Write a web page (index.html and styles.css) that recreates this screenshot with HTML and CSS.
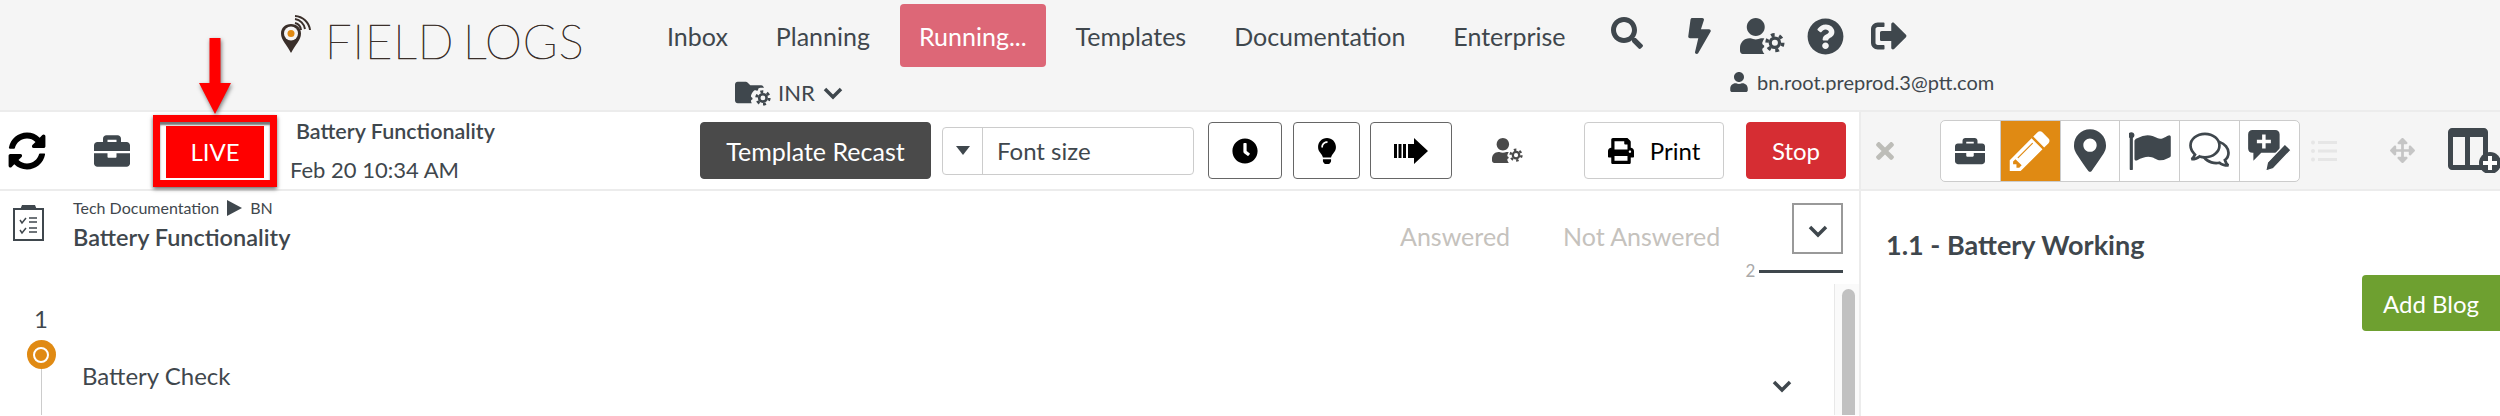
FILE: index.html
```html
<!DOCTYPE html>
<html>
    <head>
        <title>Field Logs</title>
        <meta charset="UTF-8">
        <meta name="viewport" content="width=device-width, initial-scale=1.0">
        <link rel="stylesheet" href="styles.css">
    </head>
    <body>
        <svg class="defs" aria-hidden="true">
            <symbol id="i-sync" viewBox="0 0 512 512"><path d="M370.72 133.28C339.458 104.008 298.888 87.962 255.848 88c-77.458.068-144.328 53.178-162.791 126.85-1.344 5.363-6.122 9.15-11.651 9.15H24.103c-7.498 0-13.194-6.807-11.807-14.176C33.933 94.924 134.813 8 256 8c66.448 0 126.791 26.136 171.315 68.685L463.03 40.97C478.149 25.851 504 36.559 504 57.941V192c0 13.255-10.745 24-24 24H345.941c-21.382 0-32.09-25.851-16.971-40.971l41.75-41.749zM32 296h134.059c21.382 0 32.09 25.851 16.971 40.971l-41.75 41.75c31.262 29.273 71.835 45.319 114.876 45.28 77.418-.07 144.315-53.144 162.787-126.849 1.344-5.363 6.122-9.15 11.651-9.15h57.304c7.498 0 13.194 6.807 11.807 14.176C478.067 417.076 377.187 504 256 504c-66.448 0-126.791-26.136-171.315-68.685L48.97 471.03C33.851 486.149 8 475.441 8 454.059V320c0-13.255 10.745-24 24-24z"/></symbol>
            <symbol id="i-briefcase" viewBox="0 0 512 512"><path d="M320 336c0 8.84-7.16 16-16 16h-96c-8.84 0-16-7.16-16-16v-48H0v144c0 25.6 22.4 48 48 48h416c25.6 0 48-22.4 48-48V288H320v48zm144-208h-80V80c0-25.6-22.4-48-48-48H176c-25.6 0-48 22.4-48 48v48H48c-25.6 0-48 22.4-48 48v80h512v-80c0-25.6-22.4-48-48-48zm-144 0H192V96h128v32z"/></symbol>
            <symbol id="i-search" viewBox="0 0 512 512"><path d="M505 442.7L405.3 343c-4.5-4.5-10.6-7-17-7H372c27.6-35.3 44-79.7 44-128C416 93.1 322.9 0 208 0S0 93.1 0 208s93.1 208 208 208c48.3 0 92.7-16.4 128-44v16.3c0 6.4 2.5 12.5 7 17l99.7 99.7c9.4 9.4 24.6 9.4 33.9 0l28.3-28.3c9.4-9.4 9.4-24.6.1-34zM208 336c-70.7 0-128-57.2-128-128 0-70.7 57.2-128 128-128 70.7 0 128 57.2 128 128 0 70.7-57.2 128-128 128z"/></symbol>
            <symbol id="i-bolt" viewBox="0 0 320 512"><path d="M296 160H180.6l42.6-129.8C227.2 15 215.7 0 200 0H56C44 0 33.8 8.9 32.2 20.8l-32 240C-1.7 275.2 9.5 288 24 288h118.7L96.6 482.5c-3.6 15.2 8 29.5 23.3 29.5 8.4 0 16.4-4.4 20.8-12l176-304c9.3-15.9-2.2-36-20.7-36z"/></symbol>
            <symbol id="i-question" viewBox="0 0 512 512"><path d="M504 256c0 136.997-111.043 248-248 248S8 392.997 8 256C8 119.083 119.043 8 256 8s248 111.083 248 248zM262.655 90c-54.497 0-89.255 22.957-116.549 63.758-3.536 5.286-2.353 12.415 2.715 16.258l34.699 26.31c5.205 3.947 12.621 3.008 16.665-2.122 17.864-22.658 30.113-35.797 57.303-35.797 20.429 0 45.698 13.148 45.698 32.958 0 14.976-12.363 22.667-32.534 33.976C247.128 238.528 216 254.941 216 296v4c0 6.627 5.373 12 12 12h56c6.627 0 12-5.373 12-12v-1.333c0-28.462 83.186-29.647 83.186-106.667 0-58.002-60.165-102-116.531-102zM256 338c-25.365 0-46 20.635-46 46 0 25.364 20.635 46 46 46s46-20.636 46-46c0-25.365-20.635-46-46-46z"/></symbol>
            <symbol id="i-signout" viewBox="0 0 512 512"><path d="M497 273L329 441c-15 15-41 4.5-41-17v-96H152c-13.3 0-24-10.7-24-24v-96c0-13.3 10.7-24 24-24h136V88c0-21.4 25.9-32 41-17l168 168c9.3 9.4 9.3 24.6 0 34zM192 436v-40c0-6.6-5.4-12-12-12H96c-17.7 0-32-14.3-32-32V160c0-17.7 14.3-32 32-32h84c6.6 0 12-5.4 12-12V76c0-6.6-5.4-12-12-12H96c-53 0-96 43-96 96v192c0 53 43 96 96 96h84c6.6 0 12-5.4 12-12z"/></symbol>
            <symbol id="i-user" viewBox="0 0 448 512"><path d="M224 256c70.7 0 128-57.3 128-128S294.7 0 224 0 96 57.3 96 128s57.3 128 128 128zm89.6 32h-16.7c-22.2 10.2-46.9 16-72.9 16s-50.6-5.8-72.9-16h-16.7C60.2 288 0 348.2 0 422.4V464c0 26.5 21.5 48 48 48h352c26.5 0 48-21.5 48-48v-41.6c0-74.2-60.2-134.4-134.4-134.4z"/></symbol>
            <symbol id="i-usercog" viewBox="0 0 640 512">
                <path d="M224 256c70.7 0 128-57.3 128-128S294.7 0 224 0 96 57.3 96 128s57.3 128 128 128z"/>
                <path d="M0 464v-41.6C0 348.2 60.2 288 134.4 288h16.7c22.3 10.2 46.9 16 72.9 16s50.7-5.8 72.9-16h16.7c12 0 22 1.500 32 4-12 17-22 37-28 58-4 14 2 28 14 35l12 7v24l-12 7c-12 7-18 21-14 35 6 20 16 39 30 55H48c-26.500 0-48-21.500-48-48z"/>
                <circle cx="496" cy="352" r="66" fill="none" stroke="currentColor" stroke-width="46"/>
                <circle cx="496" cy="352" r="112" fill="none" stroke="currentColor" stroke-width="50" stroke-dasharray="52 65.300"/>
            </symbol>
            <symbol id="i-foldercog" viewBox="0 0 640 512">
                <path d="M464 128H272l-54.600-54.600C211.400 67.400 203.300 64 194.700 64H48C21.500 64 0 85.500 0 112v288c0 26.500 21.500 48 48 48h250c-6-10-10-20-13-30-4-14 2-28 14-35l12-7v-24l-12-7c-12-7-18-21-14-35 10-34 30-65 56-88 11-9 26-10 38-3l12 7c6-3 13-7 20-9v-14c0-14 9-26 23-29 12-3 30-4 42-4 16 0 20 1 36 4V176c0-26.500-21.500-48-48-48z"/>
                <circle cx="496" cy="352" r="66" fill="none" stroke="currentColor" stroke-width="46"/>
                <circle cx="496" cy="352" r="112" fill="none" stroke="currentColor" stroke-width="50" stroke-dasharray="52 65.300"/>
            </symbol>
            <symbol id="i-clock" viewBox="0 0 512 512"><path d="M256 8C119 8 8 119 8 256s111 248 248 248 248-111 248-248S393 8 256 8zm92.490 313l-20 25a16 16 0 0 1-22.490 2.500l-67-49.720a40 40 0 0 1-15-31.230V112a16 16 0 0 1 16-16h32a16 16 0 0 1 16 16v144l58 42.500a16 16 0 0 1 2.490 22.500z"/></symbol>
            <symbol id="i-bulb" viewBox="0 0 352 512"><path d="M96.060 454.350c.01 6.290 1.870 12.450 5.360 17.690l17.090 25.690a31.990 31.990 0 0 0 26.640 14.280h61.710a31.990 31.990 0 0 0 26.640-14.280l17.090-25.690a31.989 31.989 0 0 0 5.360-17.690l.04-38.350H96.010l.05 38.350zM0 176c0 44.370 16.450 84.850 43.560 115.780 16.520 18.850 42.360 58.230 52.210 91.450.04.260.07.520.11.780h160.240c.04-.260.07-.510.11-.780 9.850-33.220 35.690-72.600 52.210-91.450C335.550 260.850 352 220.370 352 176 352 78.610 272.910-.3 175.450 0 73.440.31 0 82.970 0 176zm176-80c-44.110 0-80 35.890-80 80 0 8.840-7.160 16-16 16s-16-7.160-16-16c0-61.760 50.240-112 112-112 8.840 0 16 7.160 16 16s-7.160 16-16 16z"/></symbol>
            <symbol id="i-print" viewBox="0 0 512 512"><path d="M448 192V77.250c0-8.490-3.370-16.620-9.370-22.630L393.370 9.370c-6-6-14.140-9.370-22.630-9.370H96C78.330 0 64 14.330 64 32v160c-35.350 0-64 28.650-64 64v112c0 8.840 7.160 16 16 16h48v96c0 17.670 14.330 32 32 32h320c17.670 0 32-14.330 32-32v-96h48c8.840 0 16-7.160 16-16V256c0-35.350-28.650-64-64-64zm-64 256H128v-96h256v96zm0-224H128V64h192v48c0 8.840 7.160 16 16 16h48v96zm48 72c-13.250 0-24-10.750-24-24 0-13.260 10.750-24 24-24s24 10.740 24 24c0 13.250-10.750 24-24 24z"/></symbol>
            <symbol id="i-times" viewBox="0 0 352 512"><path d="M242.720 256l100.070-100.070c12.280-12.280 12.280-32.190 0-44.480l-22.240-22.240c-12.280-12.280-32.190-12.280-44.480 0L176 189.280 75.930 89.210c-12.280-12.280-32.190-12.280-44.480 0L9.210 111.450c-12.280 12.280-12.280 32.190 0 44.480L109.280 256 9.210 356.070c-12.280 12.280-12.280 32.190 0 44.480l22.240 22.240c12.280 12.280 32.200 12.280 44.480 0L176 322.720l100.070 100.070c12.280 12.280 32.200 12.280 44.480 0l22.240-22.240c12.280-12.280 12.280-32.190 0-44.480L242.720 256z"/></symbol>
            <symbol id="i-pencil" viewBox="100 100 1600 1600"><path d="M491 1536l91-91-235-235-91 91v107h128v128h107zm523-928q0-22-22-22-10 0-17 7l-542 542q-7 7-7 17 0 22 22 22 10 0 17-7l542-542q7-7 7-17zm-54-192l416 416-832 832h-416v-416zm683 96q0 53-37 90l-166 166-416-416 166-165q36-38 90-38 53 0 91 38l235 234q37 39 37 91z"/></symbol>
            <symbol id="i-marker" viewBox="0 0 384 512"><path d="M172.268 501.670C26.970 291.031 0 268.413 0 192 0 85.961 85.961 0 192 0s192 85.961 192 192c0 76.413-26.970 99.031-172.268 309.670-9.535 13.774-29.930 13.773-39.464 0zM192 272c44.183 0 80-35.817 80-80s-35.817-80-80-80-80 35.817-80 80 35.817 80 80 80z"/></symbol>
            <symbol id="i-flag" viewBox="100 120 1700 1540"><path d="M320 256q0 72-64 110v1266q0 13-9.500 22.500t-22.500 9.500h-64q-13 0-22.500-9.500t-9.500-22.500v-1266q-64-38-64-110 0-53 37.500-90.500t90.500-37.500 90.500 37.500 37.500 90.500zm1472 64v763q0 25-12.500 38.500t-39.500 27.500q-215 116-369 116-61 0-123.500-22t-108.500-48-115.500-48-142.500-22q-192 0-464 146-17 9-33 9-26 0-45-19t-19-45v-742q0-32 31-55 21-14 79-43 236-120 421-120 107 0 200 29t219 88q38 19 88 19 54 0 117.500-21t110-47 88-47 54.500-21q26 0 45 19t19 45z"/></symbol>
            <symbol id="i-move" viewBox="0 0 512 512"><path d="M352.201 425.775l-79.196 79.196c-9.373 9.373-24.568 9.373-33.941 0l-79.196-79.196c-15.119-15.119-4.411-40.971 16.971-40.970h51.162L228 284H127.196v51.162c0 21.382-25.851 32.090-40.971 16.971L7.029 272.937c-9.373-9.373-9.373-24.569 0-33.941L86.225 159.800c15.119-15.119 40.971-4.411 40.971 16.971V228H228V127.196h-51.230c-21.382 0-32.090-25.851-16.971-40.971l79.196-79.196c9.373-9.373 24.568-9.373 33.941 0l79.196 79.196c15.119 15.119 4.411 40.971-16.971 40.971h-51.162V228h100.804v-51.162c0-21.382 25.851-32.090 40.970-16.971l79.196 79.196c9.373 9.373 9.373 24.569 0 33.941L425.773 352.200c-15.119 15.119-40.971 4.411-40.970-16.971V284H284v100.804h51.230c21.382 0 32.090 25.851 16.971 40.971z"/></symbol>
        </svg>

        <!-- Шапка -->
        <header class="topbar">
            <div class="logo">
                <svg class="logo-pin" viewBox="0 0 31 38">
                    <path d="M11 9C5 9 1 13 1 18.500c0 6.500 6 11.500 10 19.500 4-8 10-13 10-19.500C21 13 17 9 11 9z" fill="#3a2f2a"/>
                    <circle cx="11" cy="18.500" r="7" fill="#f5f5f5"/>
                    <circle cx="11" cy="18.500" r="3.500" fill="#e08a13"/>
                    <g fill="none" stroke="#3a2f2a" stroke-width="2">
                        <path d="M15 8a8 8 0 0 1 6 7"/>
                        <path d="M15 4a12 12 0 0 1 10 10"/>
                        <path d="M15 1a16 16 0 0 1 15 14"/>
                    </g>
                </svg>
                <span class="logo-text">FIELD LOGS</span>
            </div>
            <div class="top-center">
                <nav class="nav">
                    <a class="nav-link">Inbox</a>
                    <a class="nav-link">Planning</a>
                    <a class="nav-link active">Running...</a>
                    <a class="nav-link">Templates</a>
                    <a class="nav-link">Documentation</a>
                    <a class="nav-link">Enterprise</a>
                </nav>
                <div class="org">
                    <svg class="ic org-ic"><use href="#i-foldercog"/></svg>
                    <span>INR</span>
                    <svg class="chev org-chev" viewBox="0 0 20 14"><path d="M2 3l8 8 8-8"/></svg>
                </div>
            </div>
            <div class="top-right">
                <div class="top-icons">
                    <svg class="ic ic-search"><use href="#i-search"/></svg>
                    <svg class="ic ic-bolt"><use href="#i-bolt"/></svg>
                    <svg class="ic ic-cog"><use href="#i-usercog"/></svg>
                    <svg class="ic ic-help"><use href="#i-question"/></svg>
                    <svg class="ic ic-out"><use href="#i-signout"/></svg>
                </div>
                <div class="account">
                    <svg class="ic ic-user"><use href="#i-user"/></svg>
                    <span>bn.root.preprod.3@ptt.com</span>
                </div>
            </div>
        </header>

        <div class="workspace">
            <main class="main">
                <div class="toolbar">
                    <svg class="ic tb-sync"><use href="#i-sync"/></svg>
                    <svg class="ic tb-case"><use href="#i-briefcase"/></svg>
                    <div class="live-mark">
                        <div class="live-btn">LIVE</div>
                        <!-- Красная стрелка-аннотация -->
                        <svg class="live-arrow" viewBox="0 0 32 76">
                            <path d="M10.500 0h11v45H32L16 76 0 45h10.500z"/>
                        </svg>
                    </div>
                    <div class="run-info">
                        <div class="run-title">Battery Functionality</div>
                        <div class="run-date">Feb 20 10:34 AM</div>
                    </div>
                    <button class="btn btn-dark">Template Recast</button>
                    <div class="font-select">
                        <span class="font-caret"><i></i></span>
                        <span class="font-label">Font size</span>
                    </div>
                    <button class="btn btn-icon btn-clock"><svg class="ic"><use href="#i-clock"/></svg></button>
                    <button class="btn btn-icon btn-bulb"><svg class="ic"><use href="#i-bulb"/></svg></button>
                    <button class="btn btn-icon btn-next">
                        <svg viewBox="0 0 34 26" class="next-ic"><path d="M0 6h3v14H0zM4.500 6h3v14h-3zM9 6h3v14H9zM14 6h6V0l14 13-14 13v-6h-6z"/></svg>
                    </button>
                    <svg class="ic tb-cog"><use href="#i-usercog"/></svg>
                    <button class="btn btn-print"><svg class="ic"><use href="#i-print"/></svg>Print</button>
                    <button class="btn btn-stop">Stop</button>
                </div>

                <div class="doc-head">
                    <svg class="doc-ic" viewBox="0 0 31 36">
                        <path d="M1 4h29v31H1z" fill="none" stroke="#3f474d" stroke-width="2"/>
                        <path d="M9 0h13l2 5H7z" fill="#3f474d"/>
                        <path d="M7 15l2 3 4-5M7 25l2 3 4-5" fill="none" stroke="#3f474d" stroke-width="1.500"/>
                        <path d="M16 13h8M16 17h8M16 23h8M16 27h8" stroke="#3f474d" stroke-width="1.500"/>
                    </svg>
                    <div class="doc-titles">
                        <div class="crumbs">
                            <span>Tech Documentation</span>
                            <i class="crumb-arrow"></i>
                            <span>BN</span>
                        </div>
                        <div class="doc-title">Battery Functionality</div>
                    </div>
                    <div class="filter first">Answered</div>
                    <div class="filter">Not Answered</div>
                    <div class="collapse">
                        <div class="collapse-box"><svg class="chev" viewBox="0 0 20 14"><path d="M2 3l8 8 8-8"/></svg></div>
                        <div class="level"><span>2</span><i></i></div>
                    </div>
                </div>

                <div class="steps">
                    <div class="step-rail">
                        <div class="step-num">1</div>
                        <div class="step-dot"><i></i></div>
                        <div class="step-line"></div>
                    </div>
                    <div class="step-name">Battery Check</div>
                    <svg class="chev step-chev" viewBox="0 0 20 14"><path d="M2 3l8 8 8-8"/></svg>
                    <div class="scrollbar"><i></i></div>
                </div>
            </main>

            <aside class="side">
                <div class="side-bar">
                    <svg class="ic side-x"><use href="#i-times"/></svg>
                    <div class="tabs">
                        <div class="tab"><svg class="ic t-case"><use href="#i-briefcase"/></svg></div>
                        <div class="tab on"><svg class="ic t-pencil"><use href="#i-pencil"/></svg></div>
                        <div class="tab"><svg class="ic t-marker"><use href="#i-marker"/></svg></div>
                        <div class="tab"><svg class="ic t-flag"><use href="#i-flag"/></svg></div>
                        <div class="tab">
                            <svg class="t-chat" viewBox="0 0 46 42" fill="none" stroke="#3f474d" stroke-width="3">
                                <path d="M18 2C9 2 2 8 2 15c0 4 2 7 5 10-1 2-2 4-4 5 4 0 7-1 9-3 2 .7 4 1 6 1 9 0 16-6 16-13S27 2 18 2z"/>
                                <path d="M34 11c6 2 10 7 10 12 0 3-1 6-4 8 1 3 2 5 4 6-4 0-8-1-10-3-5 1-13 0-17-6"/>
                            </svg>
                        </div>
                        <div class="tab">
                            <svg class="t-note" viewBox="0 0 50 48">
                                <path d="M5 0h26c3 0 5 2 5 5v16c0 3-2 5-5 5H15L6 35v-9H5c-3 0-5-2-5-5V5c0-3 2-5 5-5z" fill="#3f474d"/>
                                <path d="M18 5v16M10 13h16" stroke="#fff" stroke-width="4"/>
                                <path d="M42 16l7 7-20 21-9 3 2-10z" fill="#3f474d" stroke="#fff" stroke-width="1.500"/>
                            </svg>
                        </div>
                    </div>
                    <svg class="side-list" viewBox="0 0 26 22">
                        <path d="M7 1h19v3H7zM7 9.500h19v3H7zM7 18h19v3H7z"/>
                        <circle cx="2" cy="2.500" r="2"/><circle cx="2" cy="11" r="2"/><circle cx="2" cy="19.500" r="2"/>
                    </svg>
                    <svg class="ic side-move"><use href="#i-move"/></svg>
                    <svg class="side-table" viewBox="0 0 52 45">
                        <path d="M4 0h32c2 0 4 2 4 4v38H4c-2 0-4-2-4-4V4c0-2 2-4 4-4zm1 9v28h12V9zm17 0v28h13V9z" fill="#3f474d"/>
                        <circle cx="42" cy="35" r="11" fill="#3f474d"/>
                        <path d="M42 28v14M35 35h14" stroke="#fff" stroke-width="4"/>
                    </svg>
                </div>
                <div class="side-body">
                    <h2 class="side-title">1.1 - Battery Working</h2>
                    <button class="btn-add">Add Blog</button>
                </div>
            </aside>
        </div>
    </body>
</html>
```

FILE: styles.css
```css
* {
    box-sizing: border-box;
}

html, body {
    margin: 0;
    height: 416px;
    overflow: hidden;
}

body {
    font-family: "Lato", "Open Sans", sans-serif;
    color: #3f474d;
    background: #fff;
}

.defs {
    display: none;
}

.ic {
    display: block;
    fill: currentColor;
    flex: none;
}

/* Шапка */
.topbar {
    display: flex;
    height: 112px;
    background: #f5f5f5;
    border-bottom: 2px solid #ececec;
}

.logo {
    display: flex;
    align-items: flex-start;
    width: 640px;
    padding: 15px 0 0 280px;
}

.logo-pin {
    width: 31px;
    height: 38px;
}

.logo-text {
    margin: 1px 0 0 14px;
    font-size: 47px;
    font-weight: 100;
    -webkit-text-stroke: 0.7px #3a2f2a;
    letter-spacing: 1px;
    word-spacing: -6px;
    line-height: 50px;
    color: #3a2f2a;
    white-space: nowrap;
}

.top-center {
    width: 960px;
}

.nav {
    display: flex;
    align-items: center;
    height: 63px;
    margin-top: 4px;
    padding-left: 27px;
    gap: 48px;
}

.nav-link {
    font-size: 25px;
    white-space: nowrap;
}

.nav-link.active {
    display: flex;
    align-items: center;
    height: 63px;
    padding: 0 19px;
    margin: 0 -18px;
    color: #fff;
    background: #dd6777;
    border-radius: 4px;
}

.org {
    display: flex;
    align-items: center;
    margin: 11px 0 0 95px;
    font-size: 22px;
}

.org-ic {
    width: 36px;
    height: 29px;
    margin-right: 7px;
}

.org-chev {
    margin-left: 7px;
}

.top-right {
    padding: 17px 0 0 11px;
}

.top-icons {
    display: flex;
    align-items: flex-start;
}

.ic-search {
    width: 32px;
    height: 32px;
}

.ic-bolt {
    width: 23px;
    height: 36px;
    margin: 1px 0 0 45px;
}

.ic-cog {
    width: 45px;
    height: 36px;
    margin: 1px 0 0 29px;
}

.ic-help {
    width: 37px;
    height: 37px;
    margin: 1px 0 0 22px;
}

.ic-out {
    width: 36px;
    height: 36px;
    margin: 1px 0 0 27px;
}

.account {
    display: flex;
    align-items: center;
    margin: 15px 0 0 119px;
    font-size: 20px;
    white-space: nowrap;
}

.ic-user {
    width: 18px;
    height: 20px;
    margin-right: 9px;
}

/* Рабочая область */
.workspace {
    display: flex;
    height: 304px;
}

.main {
    position: relative;
    width: 1861px;
    border-right: 2px solid #ececec;
}

.toolbar {
    display: flex;
    align-items: center;
    height: 79px;
    border-bottom: 2px solid #ececec;
}

.tb-sync {
    width: 38px;
    height: 38px;
    margin-left: 8px;
    color: #000;
}

.tb-case {
    width: 36px;
    height: 36px;
    margin-left: 48px;
}

.live-mark {
    position: relative;
    z-index: 2;
    width: 124px;
    height: 72px;
    margin-left: 23px;
    padding: 4px 6px 2px 6px;
    background: #fff;
    border: 7px solid #f00;
    box-shadow: 0 2px 4px rgba(0,0,0,0.6), inset 0 3px 2px #777;
}

.live-btn {
    display: flex;
    align-items: center;
    justify-content: center;
    height: 100%;
    font-size: 24px;
    color: #fff;
    background: #f00;
}

.live-arrow {
    position: absolute;
    left: 39px;
    top: -84px;
    width: 32px;
    height: 76px;
    fill: #f00;
    filter: drop-shadow(1px 2px 2px rgba(0,0,0,0.5));
}

.run-info {
    width: 410px;
    margin-left: 13px;
}

.run-title {
    margin: 0 0 14px 6px;
    font-size: 21.500px;
    font-weight: 600;
    line-height: 24px;
    white-space: nowrap;
}

.run-date {
    font-size: 22px;
    line-height: 26px;
}

.btn {
    display: flex;
    align-items: center;
    justify-content: center;
    flex: none;
    height: 57px;
    font-family: inherit;
    font-size: 24px;
    background: #fff;
    border: 1px solid #666;
    border-radius: 4px;
    color: #000;
}

.btn-dark {
    width: 231px;
    font-size: 25px;
    color: #fff;
    background: #4a4a4a;
    border-color: #4a4a4a;
}

.font-select {
    display: flex;
    align-items: stretch;
    width: 252px;
    height: 48px;
    margin-left: 11px;
    border: 1px solid #ccc;
    border-radius: 4px;
    font-size: 24px;
}

.font-caret {
    display: flex;
    align-items: center;
    justify-content: center;
    width: 40px;
    border-right: 1px solid #ccc;
}

.font-caret i {
    border: 7px solid transparent;
    border-top: 9px solid #3f474d;
    border-bottom: 0;
}

.font-label {
    align-self: center;
    margin-left: 14px;
}

.btn-clock {
    width: 74px;
    margin-left: 14px;
}

.btn-clock .ic {
    width: 26px;
    height: 26px;
}

.btn-bulb {
    width: 67px;
    margin-left: 11px;
}

.btn-bulb .ic {
    width: 18px;
    height: 26px;
}

.btn-next {
    width: 82px;
    margin-left: 10px;
}

.next-ic {
    width: 34px;
    height: 26px;
}

.tb-cog {
    width: 31px;
    height: 25px;
    margin-left: 40px;
    color: #4a4a4a;
}

.btn-print {
    width: 140px;
    margin-left: 61px;
    border-color: #ccc;
    gap: 16px;
}

.btn-print .ic {
    width: 26px;
    height: 26px;
}

.btn-stop {
    width: 100px;
    margin-left: 22px;
    color: #fff;
    background: #d62d33;
    border-color: #d62d33;
}

/* Заголовок документа */
.doc-head {
    display: flex;
    align-items: flex-start;
    height: 93px;
}

.doc-ic {
    width: 31px;
    height: 36px;
    margin: 14px 0 0 13px;
}

.doc-titles {
    width: 1327px;
    margin: 6px 0 0 29px;
}

.crumbs {
    display: flex;
    align-items: center;
    gap: 8px;
    font-size: 16px;
    line-height: 22px;
}

.crumb-arrow {
    border-left: 15px solid #3f474d;
    border-top: 8px solid transparent;
    border-bottom: 8px solid transparent;
}

.doc-title {
    margin-top: 4px;
    font-size: 23.500px;
    font-weight: 600;
    line-height: 28px;
}

.filter {
    margin-top: 30px;
    font-size: 25px;
    line-height: 30px;
    color: #c5c2bd;
    white-space: nowrap;
}

.filter.first {
    width: 163px;
}

.collapse {
    margin: 12px 0 0 72px;
}

.collapse-box {
    display: flex;
    justify-content: center;
    width: 51px;
    height: 51px;
    margin-left: auto;
    padding-top: 19px;
    border: 2px solid #999;
}

.level {
    display: flex;
    align-items: center;
    justify-content: flex-end;
    gap: 4px;
    margin: 6px 0 0 -47px;
    font-size: 17px;
    line-height: 22px;
    color: #aaa;
}

.level i {
    width: 84px;
    height: 3px;
    background: #3f474d;
}

.chev {
    display: block;
    width: 22px;
    height: 14px;
    fill: none;
    stroke: #3f474d;
    stroke-width: 3.500;
}

/* Шаги */
.steps {
    position: relative;
    display: flex;
    height: 131px;
}

.step-rail {
    display: flex;
    flex-direction: column;
    align-items: center;
    width: 30px;
    margin-left: 26px;
    padding-top: 20px;
}

.step-num {
    font-size: 24px;
    line-height: 30px;
}

.step-dot {
    display: flex;
    align-items: center;
    justify-content: center;
    width: 29px;
    height: 29px;
    margin-top: 6px;
    background: #e08a13;
    border-radius: 50%;
}

.step-dot i {
    width: 16px;
    height: 16px;
    border: 2px solid #fff;
    border-radius: 50%;
}

.step-line {
    flex: 1;
    width: 1px;
    background: #ccc;
}

.step-name {
    margin: 77px 0 0 26px;
    font-size: 24px;
    line-height: 30px;
}

.step-chev {
    position: absolute;
    left: 1771px;
    top: 95px;
}

.scrollbar {
    position: absolute;
    left: 1834px;
    top: 0;
    bottom: 0;
    width: 25px;
    padding: 5px 4px 0 7px;
    background: #fafafa;
    border-left: 1px solid #e8e8e8;
}

.scrollbar i {
    display: block;
    height: 100%;
    background: #c1c1c1;
    border-radius: 7px 7px 0 0;
}

/* Правая панель */
.side {
    flex: 1;
}

.side-bar {
    display: flex;
    align-items: center;
    height: 79px;
    background: #f5f5f5;
    border-bottom: 2px solid #ececec;
}

.side-x {
    width: 18px;
    height: 26px;
    margin-left: 15px;
    color: #bdbdb8;
}

.tabs {
    display: flex;
    width: 360px;
    height: 62px;
    margin-left: 46px;
    background: #fff;
    border: 1px solid #ccc;
    border-radius: 5px;
    overflow: hidden;
}

.tab {
    display: flex;
    align-items: center;
    justify-content: center;
    flex: 1;
    border-left: 1px solid #ccc;
}

.tab:first-child {
    border-left: 0;
}

.tab.on {
    color: #fff;
    background: #e08a13;
}

.t-case {
    width: 30px;
    height: 30px;
}

.t-pencil {
    width: 42px;
    height: 42px;
}

.t-marker {
    width: 32px;
    height: 43px;
}

.t-flag {
    width: 42px;
    height: 38px;
}

.t-chat {
    width: 47px;
    height: 38px;
}

.t-note {
    width: 50px;
    height: 42px;
}

.side-list {
    width: 26px;
    height: 22px;
    margin-left: 11px;
    fill: #e6e6e6;
}

.side-move {
    width: 25px;
    height: 25px;
    margin-left: 53px;
    color: #c5c5c5;
}

.side-table {
    width: 52px;
    height: 45px;
    margin-left: 33px;
}

.side-body {
    display: flex;
    flex-direction: column;
}

.side-title {
    margin: 38px 0 0 25px;
    font-size: 27px;
    font-weight: 700;
    line-height: 32px;
}

.btn-add {
    align-self: flex-end;
    width: 138px;
    height: 56px;
    margin-top: 14px;
    font-family: inherit;
    font-size: 24px;
    color: #fff;
    background: #6ea030;
    border: none;
    border-radius: 4px 0 0 4px;
}
```
